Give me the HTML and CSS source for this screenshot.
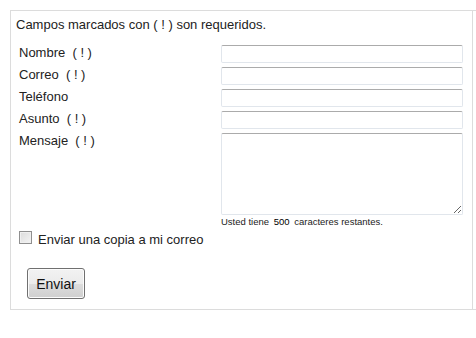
FILE: index.html
```html
<!DOCTYPE html>
<html>
<head>
  <title>Formulario de contacto</title>
  <link rel="stylesheet" href="styles.css">
</head>
<body>
  <div class="panel">
    <div class="contact">
      <p class="note">Campos marcados con ( ! ) son requeridos.</p>

      <form class="fields">
        <label class="lbl" for="nombre">Nombre&nbsp; ( ! )</label>
        <input class="txt" id="nombre" type="text">

        <label class="lbl" for="correo">Correo&nbsp; ( ! )</label>
        <input class="txt" id="correo" type="text">

        <label class="lbl" for="telefono">Teléfono</label>
        <input class="txt" id="telefono" type="text">

        <label class="lbl" for="asunto">Asunto&nbsp; ( ! )</label>
        <input class="txt" id="asunto" type="text">

        <label class="lbl" for="mensaje">Mensaje&nbsp; ( ! )</label>
        <div class="msg">
          <textarea class="area" id="mensaje"></textarea>
          <div class="count">Usted tiene <b>500</b> caracteres restantes.</div>
        </div>

        <label class="copy"><span class="box"></span>Enviar una copia a mi correo</label>

        <div class="actions">
          <button class="send" type="button">Enviar</button>
        </div>
      </form>
    </div>
  </div>
</body>
</html>
```

FILE: styles.css
```css
html, body {
  margin: 0;
  overflow: hidden;
  background: #fff;
}

body {
  font-family: "Liberation Sans", Arial, sans-serif;
  font-size: 13px;
  color: #222;
}

.panel {
  margin: 10px 0 0 10px;
  border: 1px solid #dcdcdc;
  border-right: none;
  width: 480px;
}

.contact {
  width: 461px;
  border-right: 1px solid #dcdcdc;
  padding-bottom: 10px;
}

.note {
  margin: 0;
  padding: 6px 0 0 5px;
  line-height: 15px;
}

.fields {
  display: grid;
  grid-template-columns: 202px 242px;
  grid-auto-rows: min-content;
  row-gap: 4px;
  padding: 13px 0 0 8px;
}

.lbl {
  line-height: 16px;
}

.txt {
  box-sizing: border-box;
  height: 18px;
  margin: 0;
  border: 1px solid #e1e6ec;
  border-top-color: #ababab;
  border-radius: 2px;
  padding: 0 2px;
}

.msg {
  display: flex;
  flex-direction: column;
}

.area {
  box-sizing: border-box;
  height: 82px;
  margin: 0;
  resize: vertical;
  border: 1px solid #e1e6ec;
  border-top-color: #ababab;
  border-radius: 2px;
}

.count {
  font-size: 9.5px;
  line-height: 12px;
  margin-top: 1px;
  color: #222;
}

.count b {
  font-weight: normal;
  color: #000;
  padding: 0 2px;
}

.copy {
  grid-column: 1 / 3;
  display: flex;
  align-items: center;
  line-height: 16px;
}

.box {
  box-sizing: border-box;
  width: 13px;
  height: 13px;
  border: 1px solid #8f8f8f;
  background: linear-gradient(135deg, #dcdcdc, #f4f4f4);
  box-shadow: inset 0 0 0 1px #f0f0f0;
  margin: -6px 6px 0 0;
}

.actions {
  grid-column: 1 / 3;
  padding: 16px 0 0 8px;
}

.send {
  box-sizing: border-box;
  width: 58px;
  height: 31px;
  margin: 0;
  font-family: "Liberation Sans", Arial, sans-serif;
  font-size: 14px;
  color: #111;
  border: 1px solid #707070;
  border-radius: 3px;
  background: linear-gradient(#f2f2f2, #ebebeb 50%, #dddddd 51%, #cfcfcf);
  box-shadow: inset 0 0 0 1px #fcfcfc;
}
```
